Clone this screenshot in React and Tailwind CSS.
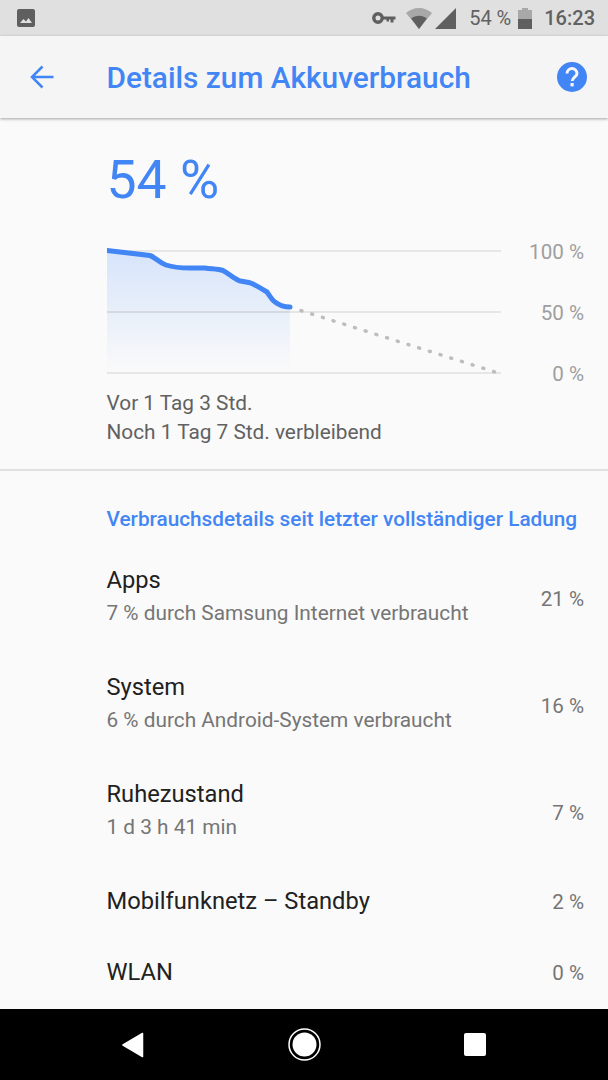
const font = { fontFamily: "Roboto, sans-serif" };

const usage = [
  { title: "Apps", sub: "7 % durch Samsung Internet verbraucht", pct: "21 %" },
  { title: "System", sub: "6 % durch Android-System verbraucht", pct: "16 %" },
  { title: "Ruhezustand", sub: "1 d 3 h 41 min", pct: "7 %" },
];

const StatusBar = () => (
  <div className="h-9 bg-[#e0e0e0] flex items-center pl-[16px] pr-[13px] text-[#616161]">
    <svg width="20" height="20" viewBox="0 0 20 20">
      <path d="M3 1h14a2 2 0 0 1 2 2v14a2 2 0 0 1-2 2H3a2 2 0 0 1-2-2V3a2 2 0 0 1 2-2z" fill="#5f5f5f" />
      <path d="M4 15l3.500-4 2.500 2.500 2.500-3.500 3.500 5z" fill="#e0e0e0" />
    </svg>
    <div className="ml-auto flex items-center">
      <svg width="24" height="14" viewBox="0 0 24 14">
        <circle cx="6" cy="7" r="4.200" fill="none" stroke="#5f5f5f" strokeWidth="3.400" />
        <path d="M10 5.400h13.500v3.200h-2v3h-3v-3h-1.500v2h-2.500v-2H10z" fill="#5f5f5f" />
      </svg>
      <svg className="ml-[10px]" width="26" height="21" viewBox="0 0 26 21">
        <path d="M0 5C3.500 2 8 0 13 0s9.500 2 13 5L13 21z" fill="#a8a8a8" />
        <path d="M5.200 10.400C7.500 8.700 10 7.800 13 7.800s5.500.9 7.800 2.600L13 21z" fill="#5f5f5f" />
      </svg>
      <svg className="ml-[3px]" width="21" height="21" viewBox="0 0 21 21">
        <path d="M21 0v21H0z" fill="#5f5f5f" />
      </svg>
      <span className="ml-[13px] text-[20px] leading-none" style={font}>54 %</span>
      <svg className="ml-[7px]" width="14" height="21" viewBox="0 0 14 21">
        <path d="M4 0h6v2h4v9H0V2h4z" fill="#a8a8a8" />
        <path d="M0 11h14v10H0z" fill="#5f5f5f" />
      </svg>
      <span className="ml-[12px] text-[20px] leading-none font-medium" style={font}>16:23</span>
    </div>
  </div>
);

const AppBar = () => (
  <div className="h-[82px] bg-[#f5f5f5] flex items-center pl-[30px] pr-[20px] shadow-[0_1px_3px_rgba(0,0,0,0.35)] relative">
    <svg width="24" height="24" viewBox="0 0 24 24">
      <path d="M23.500 12H2M12.500 1.500L2 12l10.500 10.500" fill="none" stroke="#4285f4" strokeWidth="2.500" />
    </svg>
    <span className="ml-[52.500px] mt-[2px] text-[29.800px] font-medium text-[#4285f4]" style={font}>
      Details zum Akkuverbrauch
    </span>
    <svg className="ml-auto" width="32" height="32" viewBox="0 0 32 32">
      <circle cx="16" cy="16" r="15" fill="#4285f4" />
      <path d="M11 12.500a5 5 0 0 1 10 0c0 3.500-4.800 3.800-4.800 7.500" fill="none" stroke="#f5f5f5" strokeWidth="3" />
      <rect x="14.500" y="22" width="3.200" height="3.400" fill="#f5f5f5" />
    </svg>
  </div>
);

const line =
  "M107 250.500 L150 255.500 C155 257 158 262 166 265 C172 267 180 268 190 268 L205 268 C212 269 218 269 223 270.500 C228 273 234 279 240 281 C245 282 248 282 252 283.500 C257 286 262 289 267 292 C270 296 272 300 275 302 C279 305 284 307 290 307";

const Chart = () => (
  <svg width="396" height="146" viewBox="107 240 396 146" className="shrink-0 ml-[0.500px]">
    <defs>
      <linearGradient id="fill" x1="0" y1="0" x2="0" y2="1">
        <stop offset="0" stopColor="#d6e4fa" />
        <stop offset="1" stopColor="#fafafa" />
      </linearGradient>
    </defs>
    <path d={`${line} L290 373 L107 373 Z`} fill="url(#fill)" />
    <path d="M107 251H501M107 373H501M290 312H501" stroke="#e0e0e0" strokeWidth="1.500" fill="none" />
    <path d="M107 312H290" stroke="#cfd2d6" strokeWidth="1.500" fill="none" />
    <path d={line} stroke="#4285f4" strokeWidth="5" fill="none" strokeLinecap="round" />
    <path
      d="M301 310.600L495 372"
      stroke="#bdbdbd"
      strokeWidth="3.500"
      strokeLinecap="round"
      strokeDasharray="1 10.220"
      fill="none"
    />
  </svg>
);

const Row = ({ title, sub, pct }) => (
  <div className="h-[107px] flex items-center justify-between">
    <div>
      <div className="text-[23.700px] leading-[30px] text-[#212121]">{title}</div>
      <div className="text-[20.800px] leading-[30px] text-[#757575] mt-[3px]">{sub}</div>
    </div>
    <div className="text-[20.600px] text-[#757575] mt-[6px]">{pct}</div>
  </div>
);

export default function App() {
  return (
    <div className="w-[608px] h-[1080px] flex flex-col bg-[#fafafa] overflow-hidden" style={font}>
      <StatusBar />
      <AppBar />
      <div className="flex-1 min-h-0 overflow-hidden">
        <div className="pl-[106.500px] pr-[24px]">
          <div className="pt-[30px] text-[53.500px] leading-[64px] text-[#4285f4]">54 %</div>
          <div className="mt-[28px] flex justify-between">
            <Chart />
            <div className="h-[146px] flex flex-col justify-between items-end text-[20.600px] leading-[24px] text-[#9e9e9e]">
              <span>100 %</span>
              <span>50 %</span>
              <span>0 %</span>
            </div>
          </div>
          <div className="mt-[3px] text-[20.800px] leading-[29px] text-[#616161]">
            <div>Vor 1 Tag 3 Std.</div>
            <div>Noch 1 Tag 7 Std. verbleibend</div>
          </div>
        </div>
        <div className="mt-[22px] h-[1.500px] bg-[#e0e0e0]" />
        <div className="pl-[106.500px] pr-[24px]">
          <div className="pt-[35px] text-[20.750px] leading-[26px] font-medium text-[#4285f4]">
            Verbrauchsdetails seit letzter vollständiger Ladung
          </div>
          <div className="mt-[11px]">
            {usage.map((u) => (
              <Row key={u.title} {...u} />
            ))}
            <div className="h-[71px] pt-[6px] flex items-center justify-between">
              <span className="text-[23.700px] text-[#212121]">Mobilfunknetz – Standby</span>
              <span className="text-[20.600px] text-[#757575]">2 %</span>
            </div>
            <div className="h-[71px] pt-[6px] flex items-center justify-between">
              <span className="text-[23.700px] text-[#212121]">WLAN</span>
              <span className="text-[20.600px] text-[#757575]">0 %</span>
            </div>
          </div>
        </div>
      </div>
      <div className="h-[71px] bg-black flex items-center justify-between pl-[122px] pr-[122px] shrink-0">
        <svg width="22" height="26" viewBox="0 0 22 26">
          <path d="M20.500 1.500L1 13l19.500 11.500z" fill="#fff" stroke="#fff" strokeWidth="1.500" strokeLinejoin="round" />
        </svg>
        <svg width="33" height="33" viewBox="0 0 33 33">
          <circle cx="16.500" cy="16.500" r="15.500" fill="none" stroke="#fff" strokeWidth="1.500" />
          <circle cx="16.500" cy="16.500" r="12" fill="#fff" />
        </svg>
        <div className="w-[22px] h-[23px] bg-white rounded-[2px]" />
      </div>
    </div>
  );
}
